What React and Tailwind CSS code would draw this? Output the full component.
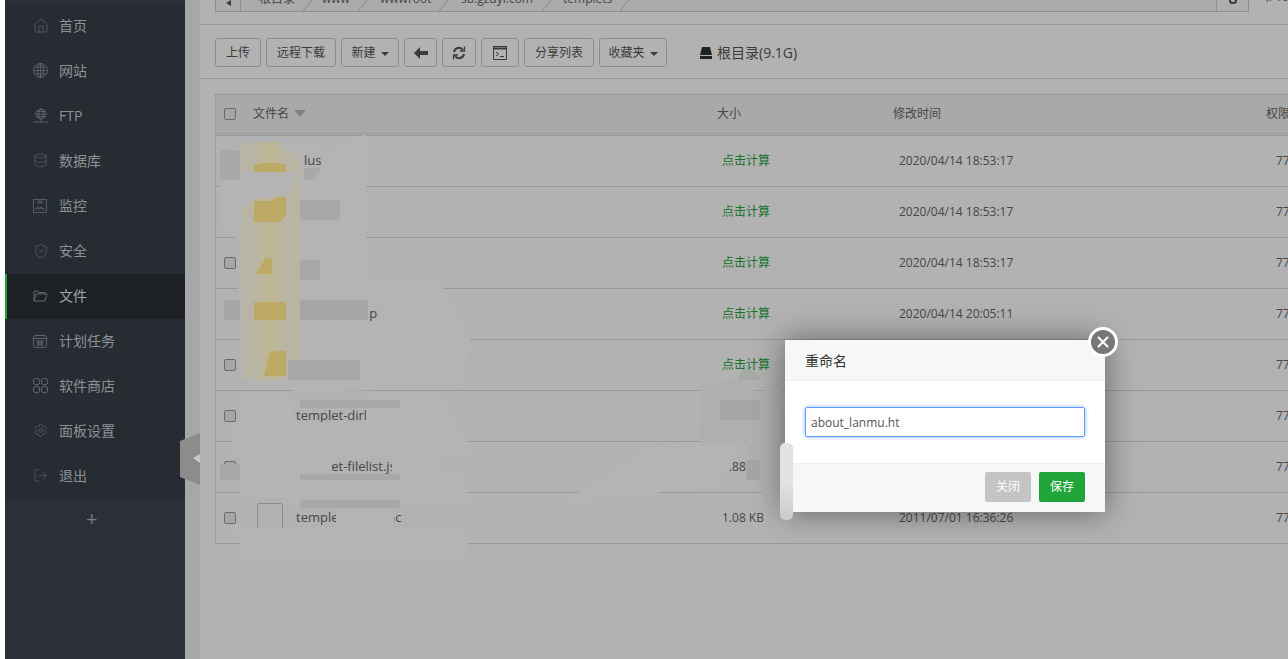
import { Database, House, LogOut, Settings, ShieldCheck } from 'lucide-react'

const FONT = "font-['Open_Sans','Noto_Sans_CJK_SC',sans-serif]"

function GlobeIcon() {
  return (
    <svg width="15" height="15" viewBox="0 0 15 15" fill="none" stroke="currentColor" strokeWidth="0.8">
      <circle cx="7.5" cy="7.5" r="7" />
      <ellipse cx="7.5" cy="7.5" rx="3" ry="7" />
      <path d="M7.5 0.5v14M0.5 7.5h14M1.5 4h12M1.5 11h12" />
    </svg>
  )
}

function FtpIcon() {
  return (
    <svg width="16" height="16" viewBox="0 0 16 16" fill="none" stroke="currentColor" strokeWidth="0.8">
      <circle cx="8" cy="6" r="5" />
      <ellipse cx="8" cy="6" rx="2.2" ry="5" />
      <path d="M3 6h10M3.7 3.5h8.6M3.7 8.5h8.6M8 11v2.5M0.5 14h15" />
    </svg>
  )
}

function MonitorIcon() {
  return (
    <svg width="14" height="14" viewBox="0 0 14 14" fill="none" stroke="currentColor" strokeWidth="0.8">
      <rect x="0.5" y="0.5" width="13" height="13" />
      <path d="M2 10h2l1-2 1.5 2.5L8 8l1 2h3M5 2h4v2H5z" />
    </svg>
  )
}

function FolderIcon() {
  return (
    <svg width="15" height="12" viewBox="0 0 15 12" fill="none" stroke="currentColor" strokeWidth="1">
      <path d="M1 11V1h4l1 1.5h6V4M1 11h11l2-7H3z" />
    </svg>
  )
}

function CalendarIcon() {
  return (
    <svg width="14" height="14" viewBox="0 0 14 14" fill="none" stroke="currentColor" strokeWidth="0.9">
      <rect x="0.5" y="1.5" width="13" height="12" rx="2" />
      <path d="M1 4.5h12M3.5 0.5v2M10.5 0.5v2M3.5 7h7M3.5 9h7M3.5 11h7M5.5 6.5v5M8.5 6.5v5" />
    </svg>
  )
}

function AppsIcon() {
  return (
    <svg width="15" height="15" viewBox="0 0 15 15" fill="none" stroke="currentColor" strokeWidth="1">
      <rect x="0.5" y="0.5" width="6" height="6" rx="1.8" />
      <rect x="8.5" y="0.5" width="6" height="6" rx="1.8" />
      <rect x="0.5" y="8.5" width="6" height="6" rx="1.8" />
      <rect x="8.5" y="8.5" width="6" height="6" rx="1.8" />
    </svg>
  )
}

const MENU = [
  { label: '首页', icon: <House size={16} strokeWidth={1} /> },
  { label: '网站', icon: <GlobeIcon /> },
  { label: 'FTP', icon: <FtpIcon /> },
  { label: '数据库', icon: <Database size={15} strokeWidth={1} /> },
  { label: '监控', icon: <MonitorIcon /> },
  { label: '安全', icon: <ShieldCheck size={16} strokeWidth={1} /> },
  { label: '文件', icon: <FolderIcon />, active: true },
  { label: '计划任务', icon: <CalendarIcon /> },
  { label: '软件商店', icon: <AppsIcon /> },
  { label: '面板设置', icon: <Settings size={15} strokeWidth={1} /> },
  { label: '退出', icon: <LogOut size={15} strokeWidth={1} /> },
]

const CRUMBS = [
  { label: '根目录', w: 'w-[63px]' },
  { label: 'www', w: 'w-[58px]' },
  { label: 'wwwroot', w: 'w-[81px]' },
  { label: 'sb.gzdyl.com', w: 'w-[102px]' },
  { label: 'templets', w: 'w-[78px]' },
]

const ROWS = [
  { name: 'plus', folder: true, size: '点击计算', time: '2020/04/14 18:53:17' },
  { name: 'style', folder: true, size: '点击计算', time: '2020/04/14 18:53:17' },
  { name: 'system', folder: true, size: '点击计算', time: '2020/04/14 18:53:17' },
  { name: 'templet-shop', folder: true, size: '点击计算', time: '2020/04/14 20:05:11' },
  { name: 'wap', folder: true, size: '点击计算', time: '2020/04/14 18:53:17' },
  { name: 'templet-dirlist.js', size: '2.14 KB', time: '2011/07/01 16:36:26' },
  { name: 'templet-filelist.js', size: '1.88 KB', time: '2011/07/01 16:36:26' },
  { name: 'templet-index.inc', size: '1.08 KB', time: '2011/07/01 16:36:26' },
]

function ToolButton({ children, className = '' }) {
  return (
    <button
      type="button"
      className={`flex h-[29px] items-center justify-center gap-[5px] rounded-[3px] border border-[#ccc] bg-white text-xs text-[#555] ${className}`}
    >
      {children}
    </button>
  )
}

function Caret() {
  return <span className="mt-[2px] border-x-[4px] border-t-[4px] border-x-transparent border-t-[#555]" />
}

function Checkbox() {
  return <span className="block h-3 w-3 rounded-[2px] border border-[#999] bg-[#eee]" />
}

function FileRow({ row }) {
  return (
    <div className="flex h-[51px] items-center border-b border-[#ddd] text-xs text-[#666]">
      <div className="ml-2 w-[29px]">
        <Checkbox />
      </div>
      <div className="w-[469px] pl-px">
        <div className="flex items-center">
          {row.folder ? (
            <svg width="32" height="26" viewBox="0 0 32 26" className="mr-[10px]">
              <path
                d="M1 5a2 2 0 0 1 2-2h10l3-1h13a2 2 0 0 1 2 2v19a2 2 0 0 1-2 2H3a2 2 0 0 1-2-2z"
                fill="#f3dc8e"
                stroke="#e2c56f"
              />
            </svg>
          ) : (
            <span className="ml-[3px] mr-[13px] block h-[30px] w-[26px] rounded-[2px] border border-[#ccc] bg-white" />
          )}
          <span className="text-[13px]">{row.name}</span>
        </div>
      </div>
      <div className={row.folder ? 'w-[177px] text-[#20a53a]' : 'w-[177px] text-[#666]'}>{row.size}</div>
      <div className="w-[377px]">{row.time}</div>
      <div>777</div>
    </div>
  )
}

function Smears() {
  return (
    <svg className="absolute inset-0" width="1288" height="659" viewBox="0 0 1288 659" fill="none">
      {/* painted-over parts of the file list */}
      <path
        fillRule="evenodd"
        d="M220 160C226 140 300 136 330 150L366 134V282H440L470 340 465 388 300 392 240 380V340L238 282V240L220 225ZM304 153H322V168H304ZM369 305H380V322H369Z"
        fill="#b4b4b4"
      />
      <path d="M240 395H293V498H240ZM240 533H293V560H240Z" fill="#b4b4b4" />
      <path d="M232 422H440C462 428 472 445 470 458H232ZM293 458H332V474H293ZM392 458H440V474H392Z" fill="#b4b4b4" />
      <path d="M290 474H465L470 508H290ZM336 508H394V527H336ZM232 528H465L470 556 440 562H250Z" fill="#b4b4b4" />
      <path d="M366 395H440L460 422H366Z" fill="#b4b4b4" />
      <path d="M560 505L650 445 745 440 720 485 600 500Z" fill="#b4b4b4" />
      <path d="M702 385L740 378 760 395 780 370 793 520H770L745 440 700 445Z" fill="#afafaf" />
      <path d="M737 380C740 368 756 364 760 380Z" fill="#a6aca4" />
      <path d="M240 143C260 142 285 146 300 156V380H243Z" fill="#b8b5a4" />
      <path d="M260 142H280V380H260Z" fill="#bdb697" />
      <path d="M240 172H296C298 184 292 194 280 198H254L240 210Z" fill="#b4b4b4" />
      <path d="M254 172V165C262 162 278 162 286 165V172Z" fill="#bca964" />
      <path d="M254 222V201H272L276 197H286V215L280 222Z" fill="#bca964" />
      <path d="M255 274L266 258H272V274Z" fill="#bca964" />
      <path d="M254 320V302H286V320Z" fill="#bca964" />
      <path d="M264 376L270 352 286 350V376Z" fill="#bca964" />
      <path d="M220 150H240V180H220ZM304 168H320V172L313 180H304Z" fill="#a9a9a9" />
      <path d="M300 200H340V220H300Z" fill="#a8a8a8" />
      <path d="M300 260H320V280H300Z" fill="#a7a7a7" />
      <path d="M224 300H240V320H224ZM300 300H368V320H300Z" fill="#a6a6a6" />
      <path d="M288 360H360V380H288Z" fill="#a7a7a7" />
      <path d="M300 400H400V408H300Z" fill="#a8a8a8" />
      <path d="M220 464H240V480H220ZM300 474H400V480H300Z" fill="#a8a8a8" />
      <path d="M300 500H400V508H300Z" fill="#a8a8a8" />
      <path d="M720 400H760V420H720ZM746 460H760V480H746Z" fill="#a6a6a6" />
    </svg>
  )
}

function RenameDialog() {
  return (
    <div className="absolute left-[785px] top-[340px] w-[320px] bg-white shadow-[0_0_30px_rgba(0,0,0,0.45)]">
      <div className="flex h-[41px] items-center border-b border-[#eee] bg-[#f6f7f7] pl-5 pt-[2px] text-sm text-[#333]">重命名</div>
      <div className="h-[82px] px-5 pt-[26px]">
        <div className="flex h-[30px] items-center rounded-[2px] border border-[#5b9df9] pl-[5px] pt-[2px] text-xs text-[#555] shadow-[0_0_4px_rgba(66,133,244,0.6)]">
          about_lanmu.ht
        </div>
      </div>
      <div className="flex h-[49px] items-start justify-end gap-2 border-t border-[#eee] bg-[#f6f8f8] px-5 pt-2">
        <button type="button" className="h-[30px] w-[46px] rounded-[2px] bg-[#c4c4c4] text-xs text-white">关闭</button>
        <button type="button" className="h-[30px] w-[46px] rounded-[2px] bg-[#20a53a] text-xs text-white">保存</button>
      </div>
      <span className="absolute -right-[13px] -top-[13px] flex h-[30px] w-[30px] items-center justify-center rounded-full border-[3px] border-white bg-[#777]">
        <svg width="12" height="12" viewBox="0 0 12 12" stroke="white" strokeWidth="2" strokeLinecap="round">
          <path d="M1.5 1.5l9 9M10.5 1.5l-9 9" />
        </svg>
      </span>
      {/* painted-over sliver on the dialog's left edge */}
      <span className="absolute left-[-5px] top-[103px] block h-[77px] w-[13px] rounded-[5px] bg-gradient-to-b from-[#e1e2e1] via-[#e1e2e1] to-[#c9cac9]" />
    </div>
  )
}

export default function App() {
  return (
    <div className={`relative flex h-[659px] w-[1288px] overflow-hidden bg-white ${FONT}`}>
      <div className="w-[5px] shrink-0 bg-white" />
      <aside className="flex w-[180px] shrink-0 flex-col bg-[#2b3038] pt-1 text-sm text-[#8d9196]">
        {MENU.map((item) => (
          <div
            key={item.label}
            className={`flex h-[45px] items-center pb-[2px] ${item.active ? 'border-l-2 border-[#20a53a] bg-[#1e2125] pl-[26px] text-[#a3a5a8]' : 'bg-[#272c33] pl-[28px]'}`}
          >
            <span className="flex w-[26px] items-center text-[#65696e]">{item.icon}</span>
            {item.label}
          </div>
        ))}
        <div className="pl-[81px] pt-[6px] text-xl leading-[28px] text-[#7c7f84]">+</div>
      </aside>

      <main className="relative flex-1 bg-[#f0f0f0] pl-[15px]">
        <div className="h-full bg-white">
          <div className="relative h-[25px] border-b border-[#ddd] px-[15px]">
            <div className="relative flex h-[12px] w-[1034px] items-end overflow-hidden border-b border-[#ccc] bg-[#f5f5f5] text-xs text-[#666]">
              <div className="flex h-full w-[26px] shrink-0 items-start justify-center border-x border-[#ccc]">
                <span className="border-y-[3px] border-r-[5px] border-y-transparent border-r-[#555]" />
              </div>
              <div className="flex -translate-y-[4px] pl-[18px]">
                {CRUMBS.map((crumb) => (
                  <span key={crumb.label} className={crumb.w}>{crumb.label}</span>
                ))}
              </div>
              <svg className="absolute left-0 top-0" width="420" height="11" viewBox="0 0 420 11" fill="none" stroke="#c4c4c4">
                <path d="M88 11l9-11M143 11l9-11M224 11l9-11M327 11l9-11M405 11l9-11" />
              </svg>
              <div className="absolute inset-y-0 right-0 flex w-[33px] items-start justify-center border-x border-[#ccc] bg-[#fafafa]">
                <span className="mt-[-3px] block h-[7px] w-[8px] rounded-full border-[2px] border-[#555]" />
              </div>
            </div>
            <span className="absolute left-[1065px] top-[-12px] text-xs text-[#666]">(大小</span>
          </div>

          <div className="flex h-[54px] items-center gap-[5px] border-b border-[#ddd] pl-[15px] pt-[2px]">
            <ToolButton className="w-[46px]">上传</ToolButton>
            <ToolButton className="w-[70px]">远程下载</ToolButton>
            <ToolButton className="w-[58px]">新建<Caret /></ToolButton>
            <ToolButton className="w-[33px]">
              <svg width="14" height="12" viewBox="0 0 14 12" fill="#555"><path d="M6 0L0 6l6 6V8h8V4H6z" /></svg>
            </ToolButton>
            <ToolButton className="w-[34px]">
              <svg width="14" height="14" viewBox="0 0 14 14" fill="none" stroke="#555" strokeWidth="2">
                <path d="M2 6a5 5 0 0 1 9-2M12 8a5 5 0 0 1-9 2" />
                <path d="M12.5 0.5v4.5H8M1.5 13.5V9H6" strokeWidth="1.3" />
              </svg>
            </ToolButton>
            <ToolButton className="w-[38px]">
              <svg width="14" height="14" viewBox="0 0 14 14" fill="none" stroke="#555">
                <rect x="0.5" y="0.5" width="13" height="13" />
                <path d="M1 2.5h12" strokeWidth="2" />
                <path d="M3 6l2.5 2L3 10M7 10.5h4" />
              </svg>
            </ToolButton>
            <ToolButton className="w-[70px]">分享列表</ToolButton>
            <ToolButton className="w-[68px]">收藏夹<Caret /></ToolButton>
            <div className="ml-[27px] flex items-center gap-[4px] text-sm text-[#555]">
              <svg width="14" height="14" viewBox="0 0 14 14" fill="#333">
                <path d="M3 1h8l2 8H1zM1 10h12v3H1z" />
              </svg>
              根目录(9.1G)
            </div>
          </div>

          <div className="ml-[15px] mt-[15px] border-l border-t border-[#ddd]">
            <div className="flex h-[41px] items-center border-b-[3px] border-double border-[#ddd] bg-[#f2f2f2] pb-px text-xs text-[#666]">
              <div className="ml-2 w-[29px]"><Checkbox /></div>
              <div className="flex w-[464px] items-center gap-[5px]">
                文件名
                <span className="border-x-[6px] border-t-[7px] border-x-transparent border-t-[#bbb]" />
              </div>
              <div className="w-[176px]">大小</div>
              <div className="w-[373px]">修改时间</div>
              <div>权限</div>
            </div>
            {ROWS.map((row) => (
              <FileRow key={row.name} row={row} />
            ))}
          </div>
        </div>
      </main>

      <div className="absolute inset-y-0 left-[185px] right-0 bg-black/30" />
      <Smears />
      {/* collapse handle on the sidebar edge */}
      <svg className="absolute left-[180px] top-[433px]" width="20" height="52" viewBox="0 0 20 52">
        <path d="M0 8L20 0V52L0 44Z" fill="#8c8c8c" />
        <path d="M13 25L20 21V30Z" fill="#c9c9c9" />
      </svg>
      <RenameDialog />
    </div>
  )
}
